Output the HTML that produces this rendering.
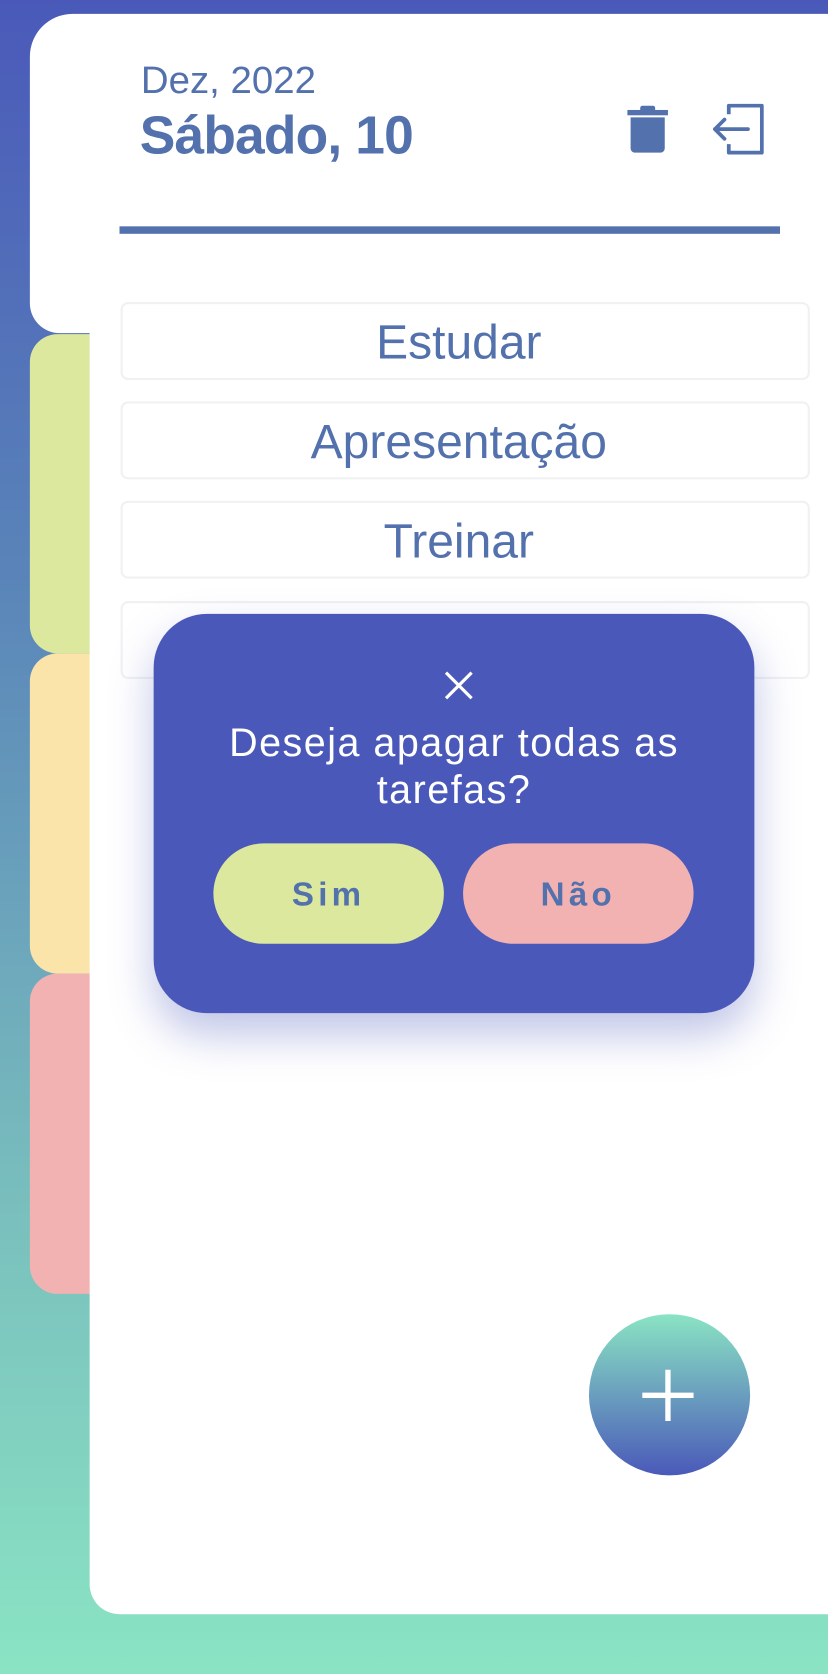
<!DOCTYPE html>
<html><head><meta charset="utf-8"><style>
html,body{margin:0;padding:0;width:828px;height:1674px;overflow:hidden}
#w{width:776px;height:1568px;transform:scale(1.06701,1.06760);transform-origin:0 0;position:relative;background:linear-gradient(#4a59b9 0%,#5a85b9 35%,#78bcbd 70%,#8ae4c3 100%);font-family:"Liberation Sans",sans-serif;overflow:hidden}
.a{position:absolute}
.tab{position:absolute;left:28px;width:80px;border-radius:26px 0 0 26px}
.item{position:absolute;left:113px;width:630px;padding-right:12px;height:69px;border:2px solid #f1f1f3;border-radius:7px;background:#fff;color:#5371ac;font-size:45px;text-align:center;line-height:71px}
</style></head><body><div id="w">
<div class="tab" style="top:313px;height:299px;background:#dce89d"></div>
<div class="tab" style="top:612px;height:300px;background:#fae4a9"></div>
<div class="tab" style="top:912px;height:300px;background:#f2b2b2"></div>
<div class="a" style="left:84px;top:280px;width:720px;height:1232px;background:#fff;border-radius:0 0 0 28px"></div>
<div class="a" style="left:28px;top:13px;width:780px;height:299px;background:#fff;border-radius:40px 0 0 28px"></div>
<div class="a" style="left:132px;top:54px;color:#5371ac;font-size:36px">Dez, 2022</div>
<div class="a" style="left:131px;top:98px;color:#5371ac;font-size:50px;font-weight:bold;letter-spacing:-0.8px">Sábado, 10</div>
<svg class="a" style="left:586px;top:98px" width="42" height="48" viewBox="0 0 42 48"><rect x="2" y="5" width="38" height="5" fill="#5371ac"/><rect x="14" y="1" width="14" height="6" rx="2" fill="#5371ac"/><path d="M5 12h32v29a4 4 0 0 1-4 4H9a4 4 0 0 1-4-4z" fill="#5371ac"/></svg>
<svg class="a" style="left:665px;top:95px" width="54" height="52" viewBox="0 0 54 52"><path d="M18 12V4h31v44H18v-8" fill="none" stroke="#5371ac" stroke-width="3.5" stroke-linejoin="round"/><path d="M36 26H5M14 17l-9 9 9 9" fill="none" stroke="#5371ac" stroke-width="3.5" stroke-linecap="round" stroke-linejoin="round"/></svg>
<div class="a" style="left:112px;top:212px;width:619px;height:7px;background:#5371ac"></div>
<div class="item" style="top:283px">Estudar</div>
<div class="item" style="top:376px">Apresentação</div>
<div class="item" style="top:469px">Treinar</div>
<div class="item" style="top:563px"></div>
<div class="a" style="left:144px;top:575px;width:563px;height:374px;background:#4a59b9;border-radius:50px;box-shadow:0 20px 40px rgba(74,89,185,0.35)"></div>
<svg class="a" style="left:416px;top:628px" width="28" height="28" viewBox="0 0 28 28"><path d="M2 2L26 26M26 2L2 26" stroke="#fff" stroke-width="3"/></svg>
<div class="a" style="left:134px;top:674px;width:583px;text-align:center;color:#fff;font-size:37px;line-height:44px;letter-spacing:1.4px">Deseja apagar todas as<br>tarefas?</div>
<div class="a" style="left:200px;top:790px;width:216px;height:94px;border-radius:47px;background:#dce89d;color:#5371ac;font-weight:bold;font-size:31px;letter-spacing:4px;text-align:center;line-height:96px">Sim</div>
<div class="a" style="left:434px;top:790px;width:216px;height:94px;border-radius:47px;background:#f2b2b2;color:#5371ac;font-weight:bold;font-size:31px;letter-spacing:4px;text-align:center;line-height:96px">Não</div>
<div class="a" style="left:552px;top:1231px;width:151px;height:151px;border-radius:50%;background:linear-gradient(#8ae4c3,#4a59b9)"></div>
<svg class="a" style="left:600px;top:1281px" width="52" height="52" viewBox="0 0 52 52"><path d="M26 2V50M2 26H50" stroke="#fff" stroke-width="5"/></svg>
</div></body></html>
